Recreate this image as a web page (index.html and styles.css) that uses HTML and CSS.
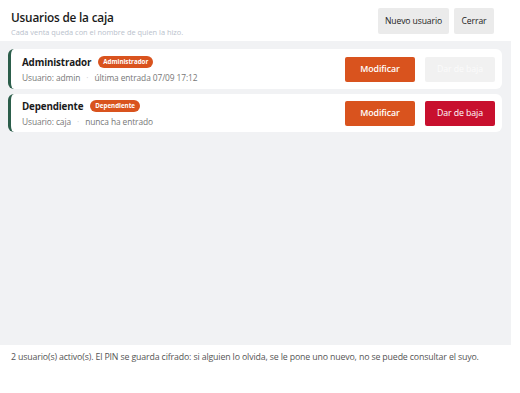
FILE: index.html
```html
<!DOCTYPE html>
<html lang="es">
<head>
<meta charset="utf-8">
<link rel="stylesheet" href="styles.css">
</head>
<body>
<div class="app">
  <header class="top">
    <div class="titles">
      <h1 class="title">Usuarios de la caja</h1>
      <p class="subtitle">Cada venta queda con el nombre de quien la hizo.</p>
    </div>
    <div class="actions">
      <button class="btn btn-light btn-new">Nuevo usuario</button>
      <button class="btn btn-light btn-close">Cerrar</button>
    </div>
  </header>
  <main class="list">
    <div class="card">
      <div class="info">
        <div class="name-row"><span class="name">Administrador</span><span class="badge">Administrador</span></div>
        <div class="meta">Usuario: admin <span class="dot">·</span> última entrada 07/09 17:12</div>
      </div>
      <div class="card-actions">
        <button class="btn btn-orange">Modificar</button>
        <button class="btn btn-disabled" disabled>Dar de baja</button>
      </div>
    </div>
    <div class="card card-short">
      <div class="info">
        <div class="name-row"><span class="name">Dependiente</span><span class="badge">Dependiente</span></div>
        <div class="meta">Usuario: caja <span class="dot">·</span> nunca ha entrado</div>
      </div>
      <div class="card-actions">
        <button class="btn btn-orange">Modificar</button>
        <button class="btn btn-red">Dar de baja</button>
      </div>
    </div>
  </main>
  <footer class="foot">2 usuario(s) activo(s). El PIN se guarda cifrado: si alguien lo olvida, se le pone uno nuevo, no se puede consultar el suyo.</footer>
</div>
</body>
</html>
```
FILE: styles.css
```css
* { box-sizing: border-box; }
html, body { margin: 0; padding: 0; background: #fff; }
body { font-family: "Open Sans", "Noto Sans", sans-serif; color: #1a1a1a; }
.app { width: 511px; height: 393px; display: flex; flex-direction: column; }
.top { height: 41px; display: flex; justify-content: space-between; align-items: flex-start; padding: 8px 17px 0 11px; }
.title { margin: 1px 0 0; font-size: 11.8px; font-weight: 600; line-height: 17px; letter-spacing: -0.2px; }
.subtitle { margin: 1px 0 0; font-size: 7.4px; color: #b9c1cc; line-height: 11px; }
.actions { display: flex; gap: 5px; }
.btn { font-family: inherit; border: 0; border-radius: 2px; font-size: 8.6px; height: 26px; padding: 0; cursor: pointer; letter-spacing: -0.1px; }
.btn-light { background: #ebebeb; color: #222; }
.btn-new { width: 71px; }
.btn-close { width: 40px; }
.list { flex: 1; background: #f1f2f4; padding: 8px 9px 0 8px; display: flex; flex-direction: column; gap: 5px; }
.card { background: #fff; border-left: 3px solid #2c5e4b; border-radius: 6px; display: flex; justify-content: space-between; align-items: center; padding: 0 7px 0 11px; height: 40px; }
.card-short { height: 38px; }
.name-row { display: flex; align-items: center; gap: 7px; }
.name { font-size: 9.8px; font-weight: 700; letter-spacing: -0.15px; }
.badge { background: #d9531e; color: #fff; font-size: 6.2px; font-weight: 700; border-radius: 6px; padding: 1px 5px; line-height: 10px; }
.meta { font-size: 8.4px; color: #777; margin-top: 3px; letter-spacing: -0.1px; }
.dot { color: #cfcfcf; margin: 0 4px; }
.card-actions { display: flex; gap: 10px; }
.card-actions .btn { width: 70px; height: 25px; font-size: 8.8px; }
.btn-orange { background: #d9531e; color: #fff; font-weight: 600; }
.btn-red { background: #c8102e; color: #fff; }
.btn-disabled { background: #f1f1f1; color: #fbfbfb; cursor: default; }
.foot { height: 48px; padding: 6px 11px 0; font-size: 8.8px; color: #555; letter-spacing: -0.15px; }
```
